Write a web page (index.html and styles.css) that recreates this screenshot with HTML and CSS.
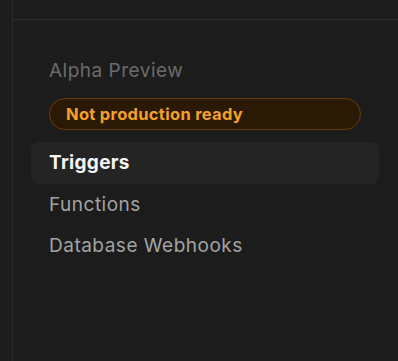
FILE: index.html
```html
<!DOCTYPE html>
<html lang="en">
<head>
    <meta charset="UTF-8">
    <title>Functions</title>
    <link rel="stylesheet" href="styles.css">
</head>
<body>
    <div class="frame">
        <div class="topbar"></div>
        <div class="menu">
            <div class="section-title">Alpha Preview</div>
            <div class="badge">Not production ready</div>
            <a class="item active">Triggers</a>
            <a class="item">Functions</a>
            <a class="item">Database Webhooks</a>
        </div>
    </div>
</body>
</html>
```
FILE: styles.css
```css
body {
    margin: 0;
    padding: 0;
    background: #1c1c1c;
    font-family: Inter, "Noto Sans", sans-serif;
}
.frame {
    margin-left: 12px;
    width: 385px;
    height: 100vh;
    border-left: 1px solid #2c2c2c;
    border-right: 1px solid #2c2c2c;
}
.topbar {
    height: 19px;
    border-bottom: 1px solid #2e2e2e;
}
.menu {
    padding: 38px 19px 0 18px;
    display: flex;
    flex-direction: column;
}
.section-title {
    padding-left: 18px;
    height: 26px;
    line-height: 26px;
    font-size: 19px;
    letter-spacing: 0.5px;
    color: #6b6b6b;
}
.badge {
    margin: 14px 18px 12px 18px;
    height: 30px;
    line-height: 30px;
    border: 1px solid #6a3b0c;
    border-radius: 16px;
    background: #2a1905;
    color: #f5a02a;
    font-size: 16.5px;
    letter-spacing: 0.3px;
    font-weight: 700;
    padding-left: 16px;
}
.item {
    height: 41px;
    line-height: 41px;
    padding-left: 18px;
    border-radius: 8px;
    font-size: 19px;
    letter-spacing: 0.5px;
    color: #a3a3a3;
    cursor: pointer;
}
.item.active {
    height: 42px;
    line-height: 42px;
    background: #242424;
    color: #f5f5f5;
    font-weight: 700;
    letter-spacing: 0.3px;
}
```
